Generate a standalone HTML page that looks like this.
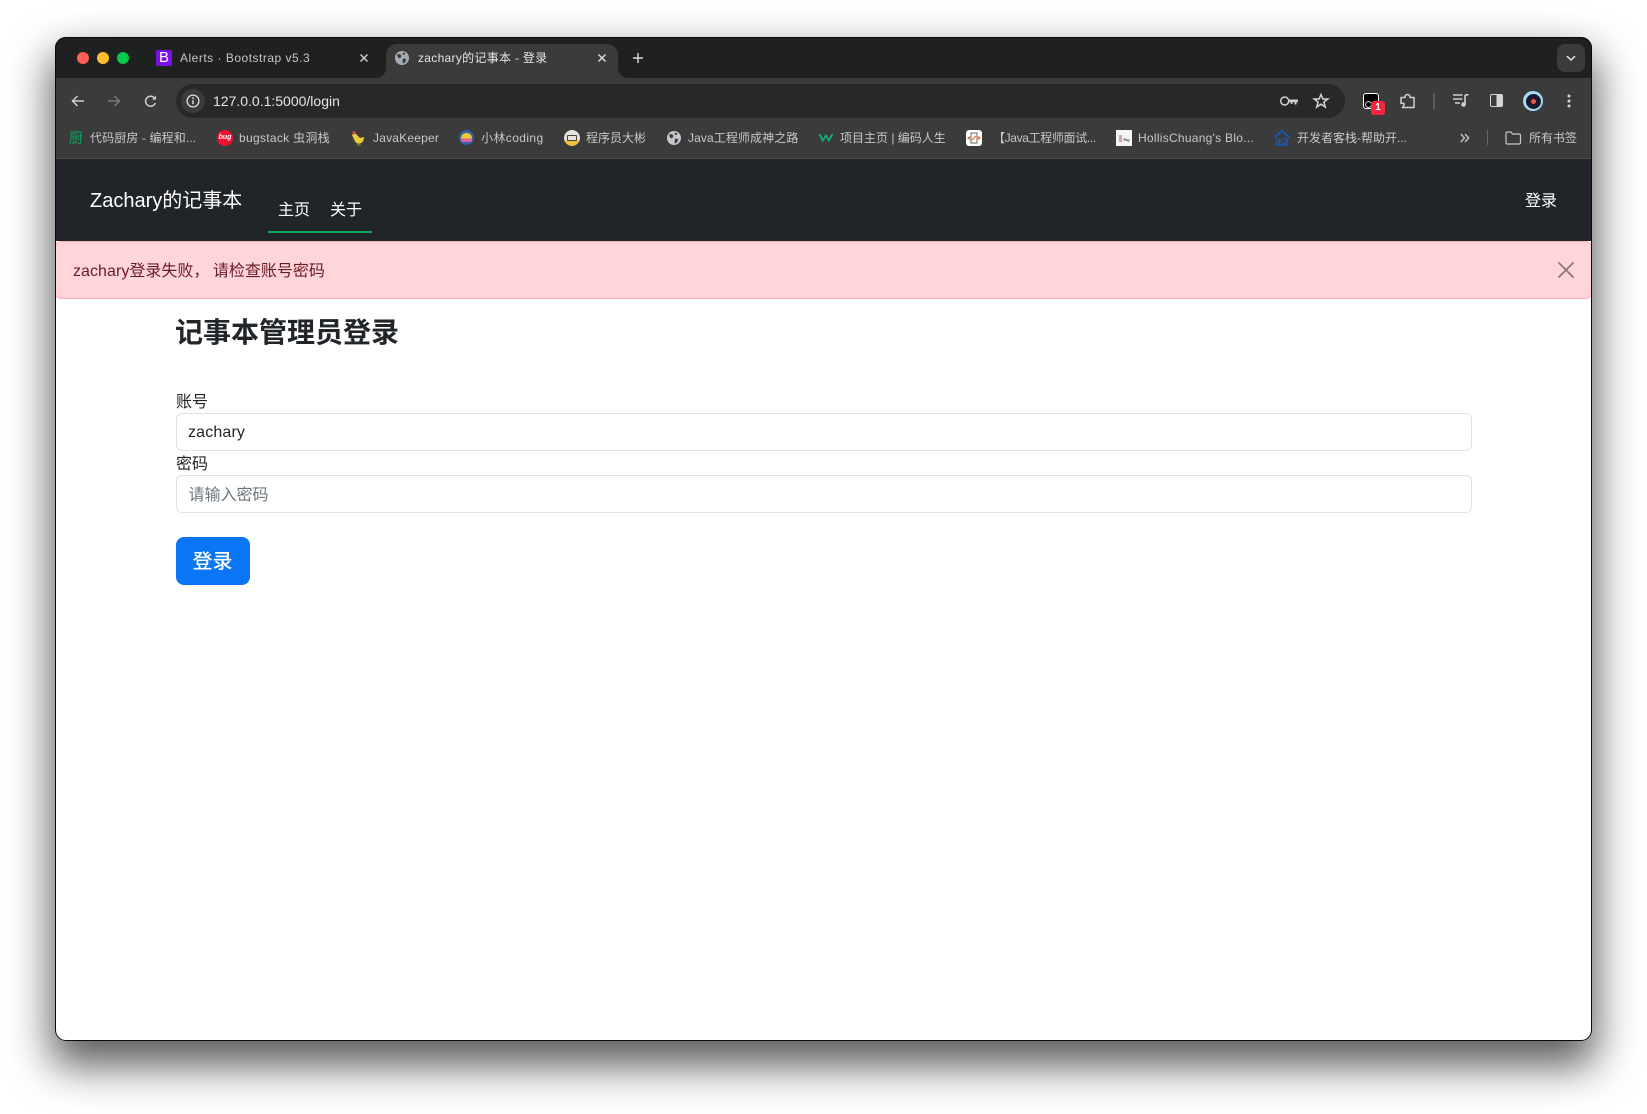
<!DOCTYPE html>
<html lang="zh">
<head>
<meta charset="utf-8">
<title>zachary的记事本 - 登录</title>
<style>
html,body{margin:0;padding:0;background:#fff;width:1647px;height:1114px;overflow:hidden}
body{position:relative;font-family:"Liberation Sans","Noto Sans CJK SC",sans-serif}
#win{position:absolute;left:55px;top:37px;width:1537px;height:1004px;border-radius:11px;overflow:hidden;background:#fff;box-shadow:0 21px 42px 4px rgba(0,0,0,.64)}
#frame{position:absolute;left:55px;top:37px;width:1535px;height:1002px;border-radius:11px;border:1px solid #0a0a0a;pointer-events:none}
#l{position:absolute;left:-55px;top:-37px;width:1647px;height:1114px}
.b{position:absolute}
.t{position:absolute;white-space:nowrap;line-height:20px;height:20px}
.bm{font-size:12px;color:#c8c8c8;top:128px}
svg{position:absolute;overflow:visible}
</style>
</head>
<body>
<div id="win"><div id="l">
<!-- strip -->
<div class="b" style="left:55px;top:37px;width:1537px;height:41px;background:#1f2121"></div>
<div class="b" style="left:55px;top:78px;width:1537px;height:80px;background:#3b3b3b"></div>
<div class="b" style="left:55px;top:158px;width:1537px;height:1px;background:#4b4b4b"></div>
<!-- active tab -->
<div class="b" style="left:386px;top:44px;width:232px;height:34px;background:#3b3b3b;border-radius:11px 11px 0 0"></div>
<svg style="left:376px;top:68px" width="10" height="10"><path d="M10 0V10H0A10 10 0 0 0 10 0Z" fill="#3b3b3b"/></svg>
<svg style="left:618px;top:68px" width="10" height="10"><path d="M0 0V10H10A10 10 0 0 1 0 0Z" fill="#3b3b3b"/></svg>
<!-- traffic -->
<div class="b" style="left:77px;top:52px;width:12px;height:12px;border-radius:50%;background:#ff5f57"></div>
<div class="b" style="left:97px;top:52px;width:12px;height:12px;border-radius:50%;background:#febc2e"></div>
<div class="b" style="left:117px;top:52px;width:12px;height:12px;border-radius:50%;background:#05c948"></div>
<!-- tab 1 -->
<div class="b" style="left:156px;top:50px;width:16px;height:16px;border-radius:2px;background:#7a10e8;color:#fff;font:400 15px/16px 'Liberation Sans',sans-serif;text-align:center">B</div>
<div class="t" style="left:180px;top:48px;font-size:12px;color:#c6c6c6;letter-spacing:.5px">Alerts · Bootstrap v5.3</div>
<svg style="left:359px;top:53px" width="10" height="10"><path d="M1.5 1.5L8.5 8.5M8.5 1.5L1.5 8.5" stroke="#d2d2d2" stroke-width="1.4" fill="none"/></svg>
<!-- tab 2 -->
<svg style="left:395px;top:51px" width="14" height="14" viewBox="0 0 14 14"><circle cx="7" cy="7" r="7" fill="#a6adb5"/><path d="M2 3.5L5 3L6.5 5L5 7.5L3 6.5ZM8 1.5L10.5 2.5L9.5 4L7.5 3.500ZM8 7.5L11.5 8L10 11.5L8 12.5L7.5 10Z" fill="#3b3b3b"/></svg>
<div class="t" style="left:418px;top:48px;font-size:12px;color:#e6e6e6;letter-spacing:.3px">zachary的记事本 - 登录</div>
<svg style="left:597px;top:53px" width="10" height="10"><path d="M1.5 1.5L8.5 8.5M8.5 1.5L1.5 8.5" stroke="#e0e0e0" stroke-width="1.4" fill="none"/></svg>
<svg style="left:633px;top:53px" width="10" height="10"><path d="M5 0V10M0 5H10" stroke="#dcdcdc" stroke-width="1.4" fill="none"/></svg>
<!-- chevron -->
<div class="b" style="left:1557px;top:44px;width:28px;height:28px;border-radius:8px;background:#3b3b3b"></div>
<svg style="left:1566px;top:55px" width="10" height="7"><path d="M1 1.2L5 5L9 1.2" stroke="#e6e6e6" stroke-width="1.5" fill="none"/></svg>
<!-- toolbar -->
<svg style="left:71px;top:95px" width="14" height="12" viewBox="0 0 14 12"><path d="M13 6H1.5M6.5 1L1.5 6L6.5 11" stroke="#d0d0d0" stroke-width="1.5" fill="none"/></svg>
<svg style="left:107px;top:95px" width="14" height="12" viewBox="0 0 14 12"><path d="M1 6H12.5M7.5 1L12.5 6L7.5 11" stroke="#7a7a7a" stroke-width="1.5" fill="none"/></svg>
<svg style="left:144px;top:95px" width="13" height="13" viewBox="0 0 13 13"><path d="M11.3 8A5 5 0 1 1 10.6 3.2" stroke="#d0d0d0" stroke-width="1.5" fill="none"/><path d="M12 0.6V4.6H8Z" fill="#d0d0d0"/></svg>
<div class="b" style="left:176px;top:84px;width:1169px;height:34px;border-radius:17px;background:#282828"></div>
<div class="b" style="left:181px;top:89px;width:24px;height:24px;border-radius:50%;background:#3b3b3b"></div>
<svg style="left:186px;top:94px" width="14" height="14" viewBox="0 0 14 14"><circle cx="7" cy="7" r="5.9" stroke="#e0e0e0" stroke-width="1.3" fill="none"/><path d="M7 6.2V10.3" stroke="#e0e0e0" stroke-width="1.4"/><circle cx="7" cy="4.2" r=".9" fill="#e0e0e0"/></svg>
<div class="t" style="left:213px;top:91px;font-size:14px;color:#e6e6e6">127.0.0.1:5000/login</div>
<svg style="left:1280px;top:96px" width="18" height="10" viewBox="0 0 18 10"><circle cx="4.7" cy="5" r="4" stroke="#cfcfcf" stroke-width="1.5" fill="none"/><path d="M8.5 3.500H18V6.200H16.500V8.500H14.500V6.200H12.500V8H10.800V6.200H8.5Z" fill="#cfcfcf"/></svg>
<svg style="left:1313px;top:93px" width="16" height="16" viewBox="0 0 16 16"><path d="M8 1.5L9.9 6H14.8L10.9 9.1L12.3 14L8 11.2L3.7 14L5.1 9.1L1.2 6H6.1Z" stroke="#d4d4d4" stroke-width="1.5" fill="none"/></svg>
<div class="b" style="left:1363px;top:93px;width:14px;height:14px;border:1px solid #fff;border-radius:3px;background:#000"></div>
<div class="b" style="left:1365px;top:101px;width:5px;height:5px;border:1px solid #ccc;border-radius:50%"></div>
<div class="b" style="left:1371px;top:101px;width:14px;height:14px;border-radius:3px;background:#f5243f;color:#fff;font:700 10px/14px 'Liberation Sans',sans-serif;text-align:center">1</div>
<svg style="left:1399px;top:93px" width="17" height="17" viewBox="0 0 17 17"><path d="M2 4.500H6C6 2.500 7 1.500 8.500 1.500S11 2.500 11 4.500H15V14.500H3.500L5 12C5.500 10.500 4 9.500 2 10.500Z" stroke="#d0d0d0" stroke-width="1.500" fill="none" stroke-linejoin="round"/></svg>
<div class="b" style="left:1433px;top:93px;width:2px;height:16px;background:#5c5c5c"></div>
<svg style="left:1453px;top:94px" width="16" height="14" viewBox="0 0 16 14"><path d="M0 1H9.500M0 5H9.500M2 9H7" stroke="#d0d0d0" stroke-width="1.500" fill="none"/><path d="M12 1V10" stroke="#d0d0d0" stroke-width="1.600"/><path d="M12 .8H15.500" stroke="#d0d0d0" stroke-width="1.600"/><circle cx="10.500" cy="10.500" r="2.300" fill="#d0d0d0"/></svg>
<div class="b" style="left:1490px;top:94px;width:11px;height:11px;border:1.500px solid #d4d4d4;border-radius:2px;background:linear-gradient(90deg,#3b3b3b 50%,#d4d4d4 50%)"></div>
<div class="b" style="left:1523px;top:91px;width:20px;height:20px;border-radius:50%;background:#a5dcf5"></div>
<div class="b" style="left:1525.500px;top:93.500px;width:15px;height:15px;border-radius:50%;background:#1a1a2c"></div>
<div class="b" style="left:1530.500px;top:98.500px;width:5px;height:5px;border-radius:50%;background:#f0554a"></div>
<svg style="left:1566px;top:94px" width="6" height="14"><circle cx="3" cy="2" r="1.500" fill="#d4d4d4"/><circle cx="3" cy="7" r="1.500" fill="#d4d4d4"/><circle cx="3" cy="12" r="1.500" fill="#d4d4d4"/></svg>
<!-- bookmarks -->
<div class="t" style="left:69px;top:128px;font-size:14px;color:#0aa55c">厨</div>
<div class="t bm" style="left:90px;letter-spacing:.12px">代码厨房 - 编程和...</div>
<div class="b" style="left:217px;top:130px;width:16px;height:16px;border-radius:50%;background:#f01030;color:#fff;font:italic 700 7px/16px 'Liberation Sans',sans-serif;text-align:center">bug</div>
<div class="t bm" style="left:239px;letter-spacing:.3px">bugstack 虫洞栈</div>
<svg style="left:351px;top:130px" width="15" height="16" viewBox="0 0 15 16"><path d="M1 5C3 3 5 3 6 5L9 8L13 7C13 11 11 14 7 13.500C4 13 3 9 1 5Z" fill="#eccb3a"/><circle cx="3" cy="2.500" r="1.600" fill="#d8405a"/><path d="M7 13.500V16M9 13.500V15.500" stroke="#b88a20" stroke-width="1"/></svg>
<div class="t bm" style="left:373px;letter-spacing:.2px">JavaKeeper</div>
<div class="b" style="left:459px;top:130px;width:15px;height:15px;border-radius:50%;background:#2e63a8"></div>
<div class="b" style="left:461px;top:133px;width:11px;height:9px;border-radius:5px 5px 2px 2px;background:linear-gradient(#f0c830 60%,#e060a0 60%)"></div>
<div class="t bm" style="left:481px;letter-spacing:.4px">小林coding</div>
<div class="b" style="left:564px;top:130px;width:16px;height:16px;border-radius:50%;background:linear-gradient(#e8e4dc 65%,#f0c040 65%)"></div>
<div class="b" style="left:567px;top:135px;width:8px;height:4px;border:1.500px solid #444;border-radius:1px"></div>
<div class="t bm" style="left:586px">程序员大彬</div>
<svg style="left:667px;top:131px" width="14" height="14" viewBox="0 0 14 14"><circle cx="7" cy="7" r="7" fill="#c4c8cc"/><path d="M2 3.500L5 3L6.500 5L5 7.500L3 6.500ZM8 1.500L10.500 2.500L9.500 4L7.500 3.500ZM8 7.500L11.500 8L10 11.500L8 12.500L7.500 10Z" fill="#3b3b3b"/></svg>
<div class="t bm" style="left:688px;letter-spacing:.1px">Java工程师成神之路</div>
<svg style="left:819px;top:132px" width="14" height="11" viewBox="0 0 14 11"><path d="M.5 2L3.800 8.500L7 3.500L9.800 8.500L13.500 2" stroke="#0bb583" stroke-width="1.700" fill="none"/></svg>
<div class="t bm" style="left:840px">项目主页 | 编码人生</div>
<div class="b" style="left:966px;top:130px;width:16px;height:16px;border-radius:3px;background:#fff"></div>
<svg style="left:966px;top:130px" width="16" height="16" viewBox="0 0 16 16"><path d="M5 3H11V13H5Z" stroke="#666" fill="none"/><path d="M1 8L4 6V10ZM15 8L12 6V10Z" fill="#e8702a"/><path d="M6 10L10 6" stroke="#e8702a" stroke-width="1.200"/></svg>
<div class="t bm" style="left:993px;letter-spacing:-.35px">【Java工程师面试...</div>
<div class="b" style="left:1116px;top:130px;width:16px;height:16px;background:#f4f4f4"></div>
<svg style="left:1116px;top:130px" width="16" height="16" viewBox="0 0 16 16"><path d="M3 5H6V12H3Z" fill="#d0a0a8"/><path d="M7 10H14M8 8L13 12" stroke="#555" stroke-width=".8"/></svg>
<div class="t bm" style="left:1138px;letter-spacing:.27px">HollisChuang's Blo...</div>
<svg style="left:1274px;top:130px" width="16" height="16" viewBox="0 0 16 16"><path d="M.5 7.500L8 1L15.500 7.500" stroke="#1757c2" stroke-width="1.800" fill="none"/><path d="M3 8V15H13V8" stroke="#1757c2" stroke-width="1.500" fill="none"/><circle cx="9.500" cy="11" r="2.400" stroke="#1757c2" fill="none"/><path d="M5.500 9V14" stroke="#1757c2" stroke-width="1.300"/></svg>
<div class="t bm" style="left:1297px">开发者客栈-帮助开...</div>
<svg style="left:1460px;top:133px" width="10" height="10" viewBox="0 0 10 10"><path d="M.8 1L4.500 5L.8 9M5 1L8.700 5L5 9" stroke="#c8c8c8" stroke-width="1.300" fill="none"/></svg>
<div class="b" style="left:1487px;top:130px;width:1px;height:15px;background:#666"></div>
<svg style="left:1505px;top:131px" width="16" height="14" viewBox="0 0 16 14"><path d="M1 2.500C1 1.500 1.500 1 2.500 1H6L7.500 3H14C14.800 3 15.500 3.500 15.500 4.500V11.500C15.500 12.500 15 13 14 13H2.500C1.500 13 1 12.500 1 11.500Z" stroke="#c8c8c8" stroke-width="1.200" fill="none"/></svg>
<div class="t bm" style="left:1529px">所有书签</div>
<!-- navbar -->
<div class="b" style="left:55px;top:159px;width:1537px;height:82px;background:#212529"></div>
<div class="t" style="left:90px;top:187px;font-size:20px;line-height:28px;height:28px;color:#fff">Zachary的记事本</div>
<div class="t" style="left:278px;top:199px;font-size:16px;line-height:24px;height:24px;color:#fff">主页</div>
<div class="t" style="left:330px;top:199px;font-size:16px;line-height:24px;height:24px;color:#fff">关于</div>
<div class="b" style="left:268px;top:231px;width:104px;height:2px;background:#0aa85a"></div>
<div class="t" style="left:1525px;top:190px;font-size:16px;line-height:24px;height:24px;color:#fff">登录</div>
<!-- alert -->
<div class="b" style="left:55px;top:241px;width:1535px;height:56px;background:#ffd5da;border:1px solid #ffb0b8;border-radius:6px"></div>
<div class="t" style="left:73px;top:260px;font-size:16px;line-height:24px;height:24px;color:#6a1a25"><span style="letter-spacing:.05px">zachary</span>登录失败，<span style="margin-left:-1px"> 请检查账号密码</span></div>
<svg style="left:1557px;top:261px" width="18" height="18" viewBox="0 0 18 18"><path d="M1.500 1.500L16.500 16.500M16.500 1.500L1.500 16.500" stroke="#8e7478" stroke-width="1.800" fill="none"/></svg>
<!-- form -->
<div class="t" style="left:175px;top:313px;font-size:28px;line-height:40px;height:40px;font-weight:700;color:#212529">记事本管理员登录</div>
<div class="t" style="left:176px;top:391px;font-size:16px;line-height:24px;height:24px;color:#212529">账号</div>
<div class="b" style="left:176px;top:413px;width:1294px;height:36px;border:1px solid #dee2e6;border-radius:6px;background:#fff"></div>
<div class="t" style="left:188px;top:421px;font-size:16px;line-height:24px;height:24px;color:#212529;letter-spacing:.15px">zachary</div>
<div class="t" style="left:176px;top:453px;font-size:16px;line-height:24px;height:24px;color:#212529">密码</div>
<div class="b" style="left:176px;top:475px;width:1294px;height:36px;border:1px solid #dee2e6;border-radius:6px;background:#fff"></div>
<div class="t" style="left:188.500px;top:484px;font-size:16px;line-height:24px;height:24px;color:#6c757d">请输入密码</div>
<div class="b" style="left:176px;top:537px;width:74px;height:48px;border-radius:8px;background:#0a76f6;color:#fff;font-size:20px;line-height:50px;text-align:center;font-weight:500;text-indent:-1px">登录</div>
</div></div>
<div id="frame"></div>
</body>
</html>
